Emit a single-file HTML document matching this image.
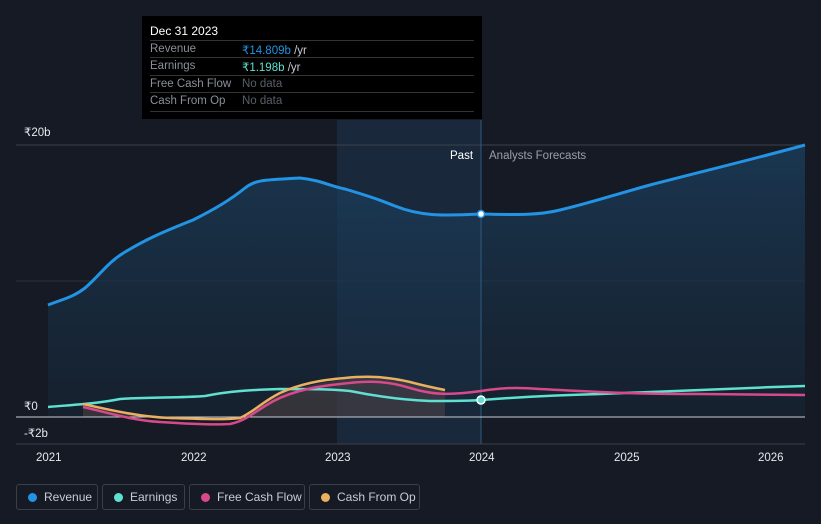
<!DOCTYPE html>
<html><head><meta charset="utf-8"><style>
body{margin:0;background:#151a24;width:821px;height:524px;overflow:hidden;font-family:"Liberation Sans",sans-serif;position:relative}
.tt{position:absolute;left:142px;top:16px;width:340px;height:103px;background:#000}
.tt .h{position:absolute;left:8px;top:8px;color:#fff;font-size:12px}
.row{position:absolute;left:8px;width:324px;border-top:1px solid #333;height:17px;font-size:11.5px;color:#8a8f99}
.row span{position:absolute;top:2px}
.leg{position:absolute;top:484px;height:26px;border:1px solid #3a404b;border-radius:3px;color:#c8ccd4;font-size:12px;box-sizing:border-box}
.leg i{position:absolute;left:11px;top:8px;width:9px;height:9px;border-radius:50%}
.leg b{font-weight:normal;position:absolute;left:27px;top:5px}
.ax{position:absolute;color:#e6e8ec;font-size:11.5px}
</style></head><body>
<svg width="821" height="524" style="position:absolute;left:0;top:0">
<defs>
<linearGradient id="g" x1="0" y1="0" x2="0" y2="1"><stop offset="0" stop-color="#1c4466" stop-opacity=".9"/><stop offset="1" stop-color="#17283a" stop-opacity=".6"/></linearGradient>
</defs>
<rect x="337" y="120" width="144" height="324" fill="#19283a"/>
<line x1="16" y1="145" x2="805" y2="145" stroke="#3a404b"/>
<line x1="16" y1="281" x2="805" y2="281" stroke="#2a303a"/>
<line x1="16" y1="444" x2="805" y2="444" stroke="#3a404b"/>
<path d="M48,305 C60,300 72,298 85,288 C100,275 108,262 125,252 C145,240 160,233 193,220 C215,209 230,200 245,188 C255,180 262,180 300,178 C320,180 330,186 345,189 C365,195 375,198 395,206 C420,216 440,216 481,214 C520,215 540,215 560,210 C590,203 610,196 650,185 C700,172 750,160 805,145 L805,417 L48,417 Z" fill="url(#g)" opacity=".75"/>
<path d="M83,404 C120,412 150,417 190,419 C220,420 235,422 255,410 C275,393 300,386 340,380 C365,377 385,376 410,382 C425,386 435,388 445,390 L445,417 L83,417 Z" fill="#5b4a4a" opacity=".45"/>
<line x1="481" y1="120" x2="481" y2="444" stroke="#2f5a80"/>
<path d="M48,305 C60,300 72,298 85,288 C100,275 108,262 125,252 C145,240 160,233 193,220 C215,209 230,200 245,188 C255,180 262,180 300,178 C320,180 330,186 345,189 C365,195 375,198 395,206 C420,216 440,216 481,214 C520,215 540,215 560,210 C590,203 610,196 650,185 C700,172 750,160 805,145" fill="none" stroke="#2394e3" stroke-width="3"/>
<line x1="16" y1="417" x2="805" y2="417" stroke="#c8ccd4"/>
<path d="M48,407 C70,405 95,404 120,399 C150,397 180,398 205,396 C230,391 250,390 280,389 C310,389 330,389 350,391 C375,396 400,400 430,401 C455,401 470,401 481,400 C520,397 560,395 600,394 C680,391 740,388 805,386" fill="none" stroke="#5fe0d0" stroke-width="2.5"/>
<path d="M83,407 C110,413 130,420 160,422 C190,424 215,425 230,424 C245,421 252,414 265,406 C285,393 310,387 340,384 C365,381 385,380 410,388 C430,394 445,396 481,391 C500,388 515,387 540,389 C580,391 620,394 700,394 L805,395" fill="none" stroke="#d64a8c" stroke-width="2.5"/>
<path d="M83,404 C110,410 140,417 170,418 C200,419 225,420 240,418 C255,411 262,402 280,393 C300,384 320,380 345,378 C365,376 385,376 410,382 C425,386 435,388 445,390" fill="none" stroke="#e8b060" stroke-width="2.5"/>
<circle cx="481" cy="214" r="3.5" fill="#fff" stroke="#2394e3" stroke-width="1.5"/>
<circle cx="481" cy="400" r="4" fill="#5fe0d0" stroke="#fff" stroke-width="1.5"/>
</svg>
<div class="tt"><div class="h">Dec 31 2023</div>
<div class="row" style="top:24px"><span>Revenue</span><span style="left:92px;color:#2394e3">₹14.809b <span style="position:static;color:#c8ccd4">/yr</span></span></div>
<div class="row" style="top:41px"><span>Earnings</span><span style="left:92px;color:#5fe0d0">₹1.198b <span style="position:static;color:#c8ccd4">/yr</span></span></div>
<div class="row" style="top:59px"><span>Free Cash Flow</span><span style="left:92px;color:#5a5f68">No data</span></div>
<div class="row" style="top:76px;height:18px;border-bottom:1px solid #333"><span>Cash From Op</span><span style="left:92px;color:#5a5f68">No data</span></div>
</div>
<div class="ax" style="left:24px;top:125px">₹20b</div>
<div class="ax" style="left:24px;top:399px">₹0</div>
<div class="ax" style="left:24px;top:426px">-₹2b</div>
<div class="ax" style="left:450px;top:150px;color:#fff">Past</div>
<div class="ax" style="left:489px;top:150px;color:#9aa0aa">Analysts Forecasts</div>
<div class="ax" style="left:36px;top:452px">2021</div>
<div class="ax" style="left:181px;top:452px">2022</div>
<div class="ax" style="left:325px;top:452px">2023</div>
<div class="ax" style="left:469px;top:452px">2024</div>
<div class="ax" style="left:614px;top:452px">2025</div>
<div class="ax" style="left:758px;top:452px">2026</div>
<div class="leg" style="left:16px;width:82px"><i style="background:#2394e3"></i><b>Revenue</b></div>
<div class="leg" style="left:102px;width:83px"><i style="background:#5fe0d0"></i><b>Earnings</b></div>
<div class="leg" style="left:189px;width:116px"><i style="background:#d64a8c"></i><b>Free Cash Flow</b></div>
<div class="leg" style="left:309px;width:111px"><i style="background:#e8b060"></i><b>Cash From Op</b></div>
</body></html>
